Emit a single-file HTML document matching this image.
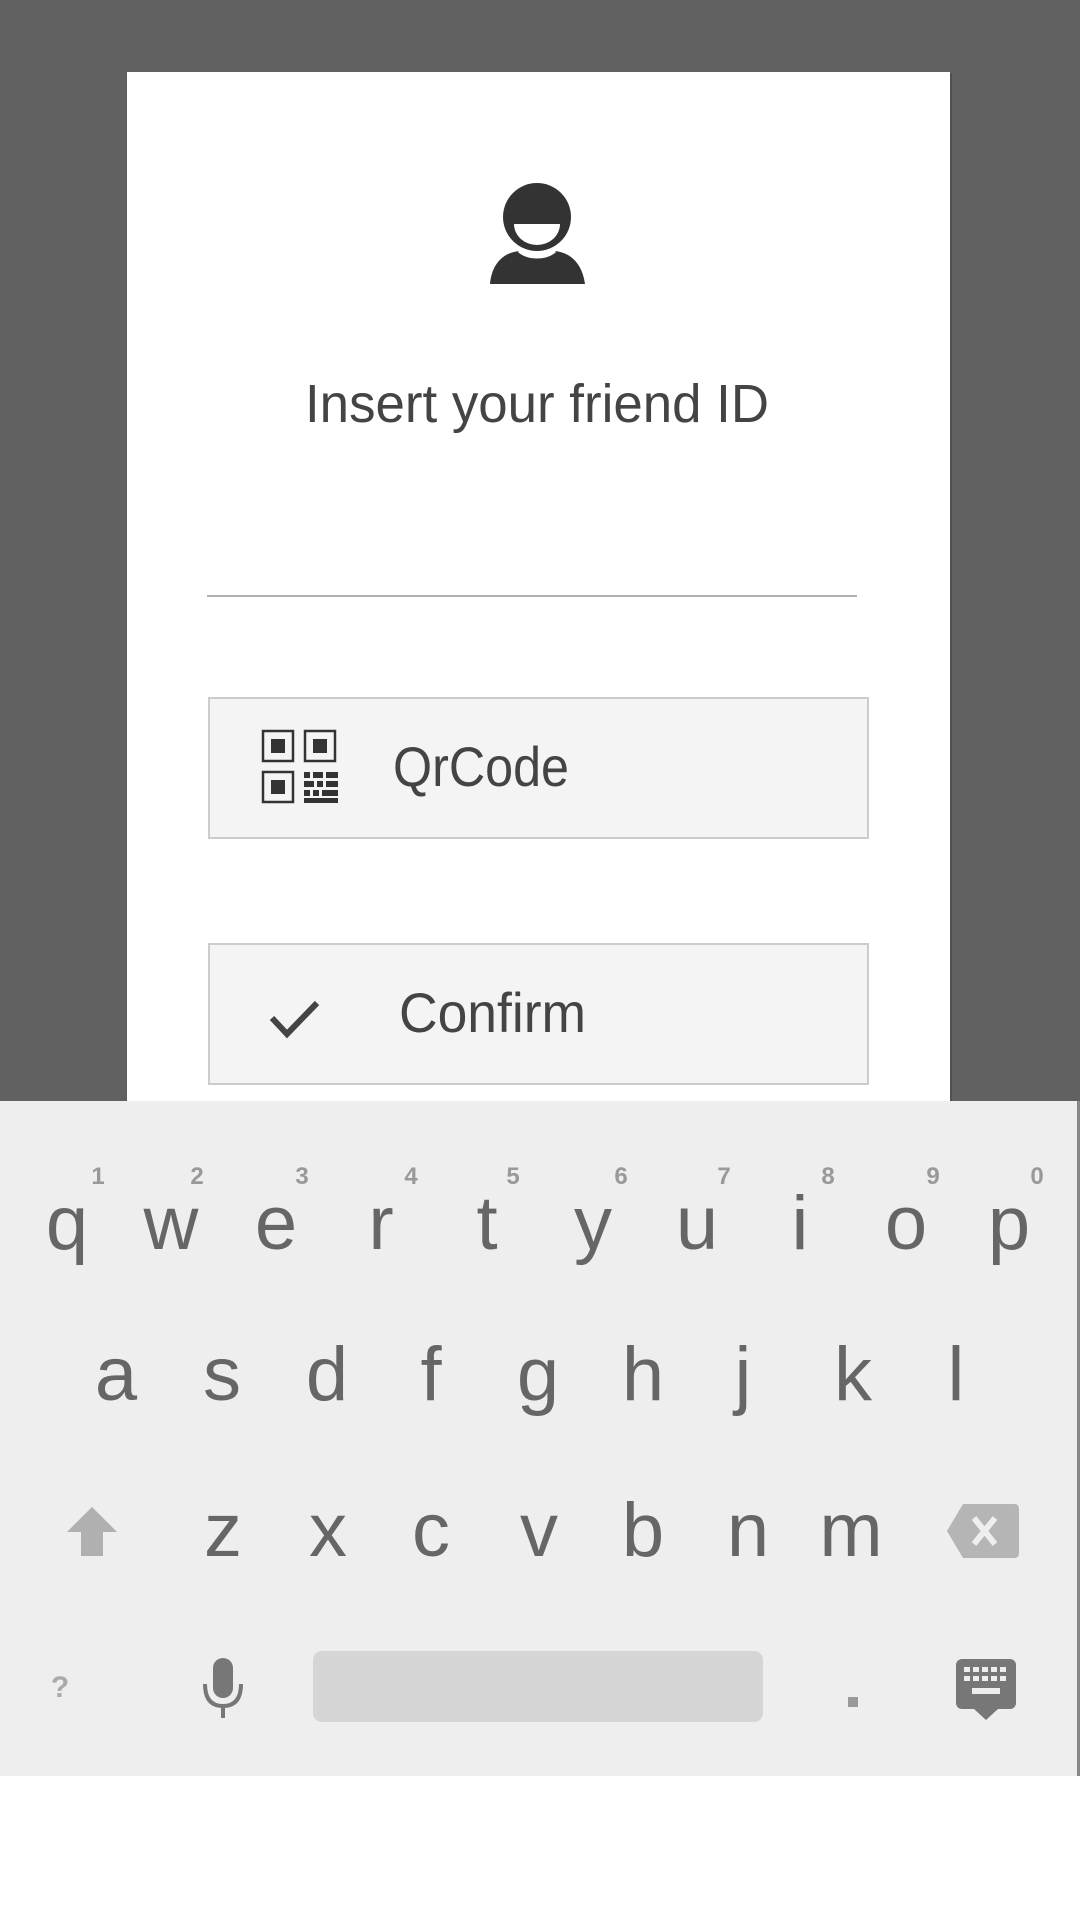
<!DOCTYPE html>
<html><head><meta charset="utf-8"><style>
html,body{margin:0;padding:0;width:1080px;height:1920px;overflow:hidden;background:#fff}
svg{display:block}
</style></head><body>
<svg width="1080" height="1920" viewBox="0 0 1080 1920" xmlns="http://www.w3.org/2000/svg" font-family="Liberation Sans, sans-serif">
<rect x="0" y="0" width="1080" height="1101" fill="#616161"/>
<rect x="129" y="73" width="823" height="1040" fill="#3f3f3f" opacity="0.5"/>
<rect x="127" y="72" width="823" height="1040" fill="#ffffff"/>
<!-- avatar -->
<circle cx="537" cy="217" r="34" fill="#333"/>
<path d="M514 224 L560 224 A23 21 0 0 1 514 224 Z" fill="#fff"/>
<path d="M490 284 C492 262 505 252 520 251 C528 258 546 258 554 251 C569 252 582 262 585 284 Z" fill="#333"/>
<path d="M519 251 C528 259 546 259 555 251" stroke="#fff" stroke-width="3" fill="none"/>
<text x="537" y="422" font-size="54" fill="#444" text-anchor="middle" textLength="464" lengthAdjust="spacingAndGlyphs">Insert your friend ID</text>
<rect x="207" y="595" width="650" height="2" fill="#b0b0b0"/>
<!-- QrCode button -->
<rect x="209" y="698" width="659" height="140" fill="#f4f4f4" stroke="#cccccc" stroke-width="2"/>
<g fill="none" stroke="#333" stroke-width="2.5">
<rect x="263" y="731" width="30" height="30"/>
<rect x="305" y="731" width="30" height="30"/>
<rect x="263" y="772" width="30" height="30"/>
</g>
<g fill="#333">
<rect x="271" y="739" width="14" height="14"/>
<rect x="313" y="739" width="14" height="14"/>
<rect x="271" y="780" width="14" height="14"/>
<rect x="304" y="772" width="6" height="6"/><rect x="313" y="772" width="10" height="6"/><rect x="326" y="772" width="12" height="6"/>
<rect x="304" y="781" width="10" height="6"/><rect x="317" y="781" width="6" height="6"/><rect x="326" y="781" width="12" height="6"/>
<rect x="304" y="790" width="6" height="6"/><rect x="313" y="790" width="6" height="6"/><rect x="322" y="790" width="16" height="6"/>
<rect x="304" y="798" width="34" height="5"/>
</g>
<text x="393" y="786" font-size="56" fill="#444" textLength="176" lengthAdjust="spacingAndGlyphs">QrCode</text>
<!-- Confirm button -->
<rect x="209" y="944" width="659" height="140" fill="#f4f4f4" stroke="#cccccc" stroke-width="2"/>
<path d="M272 1018 L287 1034 L317 1003" stroke="#444" stroke-width="6" fill="none"/>
<text x="399" y="1032" font-size="56" fill="#444" textLength="187" lengthAdjust="spacingAndGlyphs">Confirm</text>
<!-- keyboard -->
<rect x="0" y="1101" width="1080" height="675" fill="#eeeeee"/>
<rect x="1077" y="1101" width="3" height="675" fill="#888"/>
<g font-size="24" font-weight="bold" fill="#999" text-anchor="middle">
<text x="98" y="1184">1</text><text x="197" y="1184">2</text><text x="302" y="1184">3</text><text x="411" y="1184">4</text><text x="513" y="1184">5</text><text x="621" y="1184">6</text><text x="724" y="1184">7</text><text x="828" y="1184">8</text><text x="933" y="1184">9</text><text x="1037" y="1184">0</text>
</g>
<g font-size="76" fill="#666" text-anchor="middle">
<text x="67" y="1249">q</text><text x="171" y="1249">w</text><text x="276" y="1249">e</text><text x="381" y="1249">r</text><text x="487" y="1249">t</text><text x="593" y="1249">y</text><text x="697" y="1249">u</text><text x="800" y="1249">i</text><text x="906" y="1249">o</text><text x="1009" y="1249">p</text>
<text x="116" y="1400">a</text><text x="222" y="1400">s</text><text x="327" y="1400">d</text><text x="431" y="1400">f</text><text x="538" y="1400">g</text><text x="643" y="1400">h</text><text x="743" y="1400">j</text><text x="853" y="1400">k</text><text x="956" y="1400">l</text>
<text x="223" y="1556">z</text><text x="328" y="1556">x</text><text x="431" y="1556">c</text><text x="539" y="1556">v</text><text x="643" y="1556">b</text><text x="748" y="1556">n</text><text x="851" y="1556">m</text>
</g>
<!-- shift -->
<path d="M92 1507 L117 1532 L103 1532 L103 1556 L81 1556 L81 1532 L67 1532 Z" fill="#b0b0b0"/>
<!-- backspace -->
<path d="M963 1504 L1014 1504 Q1019 1504 1019 1509 L1019 1553 Q1019 1558 1014 1558 L963 1558 L947 1531 Z" fill="#b5b5b5"/>
<path d="M974 1518 L995 1544 M995 1518 L974 1544" stroke="#eee" stroke-width="6"/>
<!-- bottom row -->
<text x="60" y="1697" font-size="30" font-weight="bold" fill="#aaa" text-anchor="middle">?</text>
<rect x="213" y="1658" width="20" height="40" rx="10" fill="#777"/>
<path d="M205 1684 Q205 1706 223 1706 Q241 1706 241 1684" stroke="#777" stroke-width="4" fill="none"/>
<rect x="221" y="1706" width="4" height="12" fill="#777"/>
<rect x="313" y="1651" width="450" height="71" rx="9" fill="#d5d5d5"/>
<rect x="848" y="1697" width="10" height="10" fill="#999"/>
<rect x="956" y="1659" width="60" height="50" rx="6" fill="#777"/>
<g fill="#eee">
<rect x="964" y="1667" width="6" height="5"/><rect x="973" y="1667" width="6" height="5"/><rect x="982" y="1667" width="6" height="5"/><rect x="991" y="1667" width="6" height="5"/><rect x="1000" y="1667" width="6" height="5"/>
<rect x="964" y="1676" width="6" height="5"/><rect x="973" y="1676" width="6" height="5"/><rect x="982" y="1676" width="6" height="5"/><rect x="991" y="1676" width="6" height="5"/><rect x="1000" y="1676" width="6" height="5"/>
<rect x="972" y="1688" width="28" height="6"/>
</g>
<path d="M974 1709 L998 1709 L986 1720 Z" fill="#777"/>
</svg>
</body></html>
